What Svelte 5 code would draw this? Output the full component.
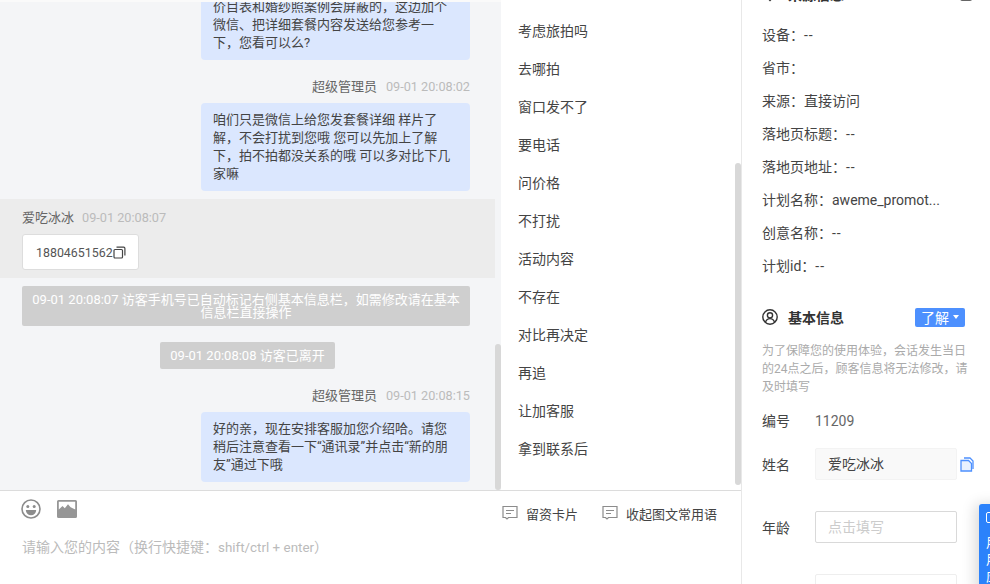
<script>
	const messages = [
		{ type: 'agent', name: '超级管理员', time: '09-01 20:08:02', text: '价目表和婚纱照案例会屏蔽的\uff0c这边加个微信、把详细套餐内容发送给您参考一下\uff0c您看可以么?' },
		{ type: 'agent', name: '超级管理员', time: '09-01 20:08:02', text: '咱们只是微信上给您发套餐详细 样片了解\uff0c不会打扰到您哦 您可以先加上了解下\uff0c拍不拍都没关系的哦 可以多对比下几家嘛' },
		{ type: 'visitor', name: '爱吃冰冰', time: '09-01 20:08:07', phone: '18804651562' },
		{ type: 'notice', wide: true, text: '09-01 20:08:07 访客手机号已自动标记右侧基本信息栏\uff0c如需修改请在基本信息栏直接操作' },
		{ type: 'notice', text: '09-01 20:08:08 访客已离开' },
		{ type: 'agent', name: '超级管理员', time: '09-01 20:08:15', text: '好的亲\uff0c现在安排客服加您介绍哈。请您稍后注意查看一下“通讯录”并点击“新的朋友”通过下哦' }
	];

	const phrases = ['考虑旅拍吗', '去哪拍', '窗口发不了', '要电话', '问价格', '不打扰', '活动内容', '不存在', '对比再决定', '再追', '让加客服', '拿到联系后'];

	const colon = '\uff1a';
	const source = [
		['设备', '--'],
		['省市', ''],
		['来源', '直接访问'],
		['落地页标题', '--'],
		['落地页地址', '--'],
		['计划名称', 'aweme_promot...'],
		['创意名称', '--'],
		['计划id', '--']
	];
</script>

<div class="page">
	<div class="main">
		<div class="top">
			<div class="chat">
				{#each messages as m}
					{#if m.type === 'notice'}
						<div class="notice" class:wide={m.wide}>{m.text}</div>
					{:else if m.type === 'visitor'}
						<div class="msg visitor">
							<div class="meta"><span class="name">{m.name}</span><span class="time">{m.time}</span></div>
							<div class="card">
								<span class="phone">{m.phone}</span>
								<svg width="13" height="13" viewBox="0 0 13 13" fill="none" stroke="#444" stroke-width="1.2">
									<rect x="1" y="3.5" width="8.5" height="8.5" rx="1" />
									<path d="M3.5 1.2h7.2a1.2 1.2 0 0 1 1.2 1.2v7" />
								</svg>
							</div>
						</div>
					{:else}
						<div class="msg agent">
							<div class="meta"><span class="name">{m.name}</span><span class="time">{m.time}</span></div>
							<div class="bubble">{m.text}</div>
						</div>
					{/if}
				{/each}
				<div class="thumb chat-thumb"></div>
			</div>
			<div class="phrases">
				{#each phrases as p}
					<div class="phrase">{p}</div>
				{/each}
				<div class="thumb list-thumb"></div>
			</div>
		</div>
		<div class="composer">
			<div class="tools">
				<div class="tools-left">
					<svg width="20" height="20" viewBox="0 0 20 20" fill="none">
						<circle cx="10" cy="10" r="9" stroke="#8c8c8c" stroke-width="1.6" />
						<circle cx="6.8" cy="7.4" r="1.5" fill="#8c8c8c" />
						<circle cx="13.2" cy="7.4" r="1.5" fill="#8c8c8c" />
						<path d="M4.8 11h10.4a5.2 5.2 0 0 1-10.4 0z" fill="#8c8c8c" />
					</svg>
					<svg width="20" height="20" viewBox="0 0 20 20">
						<path fill-rule="evenodd" fill="#969696" d="M1.500 1h17a1.500 1.500 0 0 1 1.500 1.500v15a1.500 1.500 0 0 1-1.500 1.500h-17a1.500 1.500 0 0 1-1.500-1.500v-15a1.500 1.500 0 0 1 1.500-1.500zM1.800 2.800v7.700l3.700-3.500 2.300 2.200 3.200-4 2.600 3 4.600 2.300v-7.700z" />
					</svg>
				</div>
				<div class="tools-right">
					<div class="tool">
						<svg width="16" height="16" viewBox="0 0 16 16" fill="none" stroke="#8c8c8c" stroke-width="1.200">
							<path d="M1 1.500h14v11h-8.500l-1.500 1.500-1.500-1.500h-2.500z" />
							<path d="M4 5.500h8M4 8.500h5" />
						</svg>
						留资卡片
					</div>
					<div class="tool">
						<svg width="16" height="16" viewBox="0 0 16 16" fill="none" stroke="#8c8c8c" stroke-width="1.200">
							<path d="M1 1.500h14v11h-8.500l-1.500 1.500-1.500-1.500h-2.500z" />
							<path d="M4 5.500h8M4 8.500h5" />
						</svg>
						收起图文常用语
					</div>
				</div>
			</div>
			<div class="placeholder">{'请输入您的内容\uff08换行快捷键\uff1a'}<span class="hint">shift/ctrl + enter</span>{'\uff09'}</div>
		</div>
	</div>

	<aside class="side">
		<div class="section-head">
			<svg width="16" height="16" viewBox="0 0 16 16" fill="none" stroke="#333" stroke-width="1.300">
				<path d="M8 14.500 2 8.500V2h12v6.500z" />
			</svg>
			<span class="section-title">来源信息</span>
			<svg class="head-end" width="14" height="14" viewBox="0 0 14 14" fill="none" stroke="#333" stroke-width="1.300">
				<rect x="1" y="1" width="12" height="12" rx="2" />
			</svg>
		</div>
		<div class="source">
			{#each source as [label, value]}
				<div class="source-row">{label}{colon}<span class:dash={value === '--'}>{value}</span></div>
			{/each}
		</div>

		<div class="section-head">
			<svg width="16" height="16" viewBox="0 0 16 16" fill="none" stroke="#333" stroke-width="1.400">
				<circle cx="8" cy="8" r="7.200" />
				<circle cx="8" cy="6.300" r="2.600" />
				<path d="M3.500 13c.8-2.300 2.500-3.400 4.500-3.400s3.700 1.100 4.500 3.400" />
			</svg>
			<span class="section-title">基本信息</span>
			<div class="learn">了解<span class="caret"></span></div>
		</div>
		<p class="desc">{'为了保障您的使用体验\uff0c会话发生当日的24点之后\uff0c顾客信息将无法修改\uff0c请及时填写'}</p>

		<div class="field plain">
			<span class="label">编号</span>
			<span class="number">11209</span>
		</div>
		<div class="field">
			<span class="label">姓名</span>
			<div class="input filled">爱吃冰冰</div>
			<svg class="copy" width="14" height="15" viewBox="0 0 14 15" fill="none" stroke="#4d90fe" stroke-width="1.300">
				<path d="M1 3.500h7.500l3 3v7.500h-10.500z" fill="#e8f1ff" />
				<path d="M4 1h6l3 3v8" />
			</svg>
		</div>
		<div class="field">
			<span class="label">年龄</span>
			<div class="input empty">点击填写</div>
		</div>
		<div class="field">
			<span class="label"></span>
			<div class="input faint"></div>
		</div>
	</aside>

	<div class="float">
		<span class="float-icon"></span>
		<span>用</span>
		<span>用</span>
		<span>应</span>
	</div>
</div>

<style>
	:global(body) {
		margin: 0;
		background: #fff;
	}

	.page {
		position: relative;
		display: flex;
		width: 990px;
		height: 584px;
		overflow: hidden;
		font-family: Roboto, 'Noto Sans CJK SC', sans-serif;
		font-size: 14px;
		color: #444;
	}

	.page::before {
		content: '';
		position: absolute;
		top: 0;
		left: 0;
		width: 501px;
		height: 2px;
		background: #fafafa;
		z-index: 2;
	}

	.main {
		width: 741px;
		flex-shrink: 0;
		display: flex;
		flex-direction: column;
		border-right: 1px solid #e8e8e8;
	}

	.top {
		height: 490px;
		flex-shrink: 0;
		display: flex;
		border-bottom: 1px solid #dcdcdc;
		box-sizing: content-box;
	}

	.chat {
		position: relative;
		width: 501px;
		padding-right: 6px;
		box-sizing: border-box;
		flex-shrink: 0;
		display: flex;
		flex-direction: column;
		justify-content: flex-end;
		overflow: hidden;
		background: #f4f5f7;
		font-size: 13px;
	}

	.thumb {
		position: absolute;
		right: 0;
		width: 6px;
		background: #d8d8d8;
		border-radius: 3px;
	}

	.chat-thumb {
		top: 344px;
		bottom: 0;
	}

	.list-thumb {
		top: 163px;
		bottom: 5px;
	}

	.msg {
		flex-shrink: 0;
		display: flex;
		flex-direction: column;
		padding: 10px 25px 8px 22px;
	}

	.agent {
		align-items: flex-end;
	}

	.visitor {
		background: #ececec;
		align-items: flex-start;
	}

	.meta {
		height: 18px;
		line-height: 18px;
		margin-bottom: 7px;
		color: #666;
	}

	.time {
		color: #bbb;
		font-size: 12.7px;
		margin-left: 9px;
	}

	.visitor .time {
		margin-left: 8px;
	}

	.bubble {
		width: 269px;
		box-sizing: border-box;
		padding: 8px 12px;
		line-height: 18px;
		background: #dbe7fe;
		border-radius: 4px;
		color: #444;
	}

	.card {
		display: flex;
		align-items: center;
		height: 36px;
		box-sizing: border-box;
		padding: 0 12px 0 13px;
		background: #fff;
		border: 1px solid #ddd;
		border-radius: 3px;
		color: #555;
	}

	.phone {
		font-size: 12.4px;
	}

	.notice {
		flex-shrink: 0;
		align-self: center;
		margin: 8px 0;
		padding: 7px 10px;
		line-height: 13px;
		text-align: center;
		color: #fff;
		background: #cfcfcf;
		border-radius: 2px;
	}

	.notice.wide {
		align-self: stretch;
		margin-left: 22px;
		margin-right: 25px;
	}

	.phrases {
		position: relative;
		flex: 1;
		padding-top: 12px;
		background: #fff;
		color: #444;
	}

	.phrase {
		height: 38px;
		line-height: 38px;
		padding-left: 17px;
	}

	.composer {
		flex: 1;
		background: #fff;
		font-size: 13px;
	}

	.tools {
		display: flex;
		justify-content: space-between;
		height: 38px;
		padding: 8px 0 0 21px;
		box-sizing: border-box;
	}

	.tools-left {
		display: flex;
		gap: 16px;
	}

	.tools-right {
		display: flex;
		gap: 24px;
		padding-right: 24px;
	}

	.tool {
		display: flex;
		gap: 8px;
		height: 28px;
		align-items: center;
		color: #444;
	}

	.placeholder {
		padding: 9px 0 0 22px;
		line-height: 18px;
		font-size: 14px;
		color: #bbb;
	}

	.hint {
		font-size: 13.4px;
	}

	.side {
		flex: 1;
		margin-top: -18px;
		padding-left: 20px;
		color: #444;
	}

	.section-head {
		display: flex;
		align-items: center;
		gap: 10px;
		height: 24px;
	}

	.section-title {
		font-weight: 700;
		color: #333;
	}

	.head-end {
		margin-left: auto;
		margin-right: 17px;
	}

	.source {
		margin-top: 13px;
		margin-bottom: 22px;
	}

	.source-row {
		height: 33px;
		line-height: 33px;
		white-space: nowrap;
	}

	.dash {
		letter-spacing: 1px;
	}

	.learn {
		display: flex;
		align-items: center;
		justify-content: center;
		gap: 4px;
		width: 50px;
		height: 19px;
		margin-left: auto;
		margin-right: 25px;
		color: #fff;
		background: #4d90fe;
		border-radius: 2px;
	}

	.caret {
		width: 0;
		height: 0;
		border-left: 3.500px solid transparent;
		border-right: 3.500px solid transparent;
		border-top: 4px solid #fff;
	}

	.desc {
		margin: 13px 15px 12px 0;
		font-size: 12px;
		line-height: 18px;
		color: #aaa;
	}

	.field {
		display: flex;
		align-items: center;
		height: 32px;
		margin-bottom: 31px;
	}

	.field.plain {
		height: 24px;
		margin-bottom: 16px;
	}

	.label {
		width: 53px;
		flex-shrink: 0;
	}

	.input {
		width: 142px;
		height: 32px;
		box-sizing: border-box;
		padding-left: 12px;
		line-height: 31px;
		border-radius: 2px;
	}

	.filled {
		background: #f9f9f9;
		border: 1px solid #f3f3f3;
		color: #444;
	}

	.empty {
		border: 1px solid #d9d9d9;
		color: #ccc;
	}

	.faint {
		border: 1px solid #eee;
	}

	.copy {
		margin-left: 3px;
	}

	.number {
		color: #666;
		padding-top: 1px;
	}

	.float {
		position: absolute;
		left: 979px;
		top: 504px;
		width: 60px;
		height: 90px;
		padding: 8px 0 0 7px;
		box-sizing: border-box;
		display: flex;
		flex-direction: column;
		color: #fff;
		background: #2b82fb;
		border-radius: 3px 0 0 0;
		box-shadow: -4px 0 14px rgba(0, 0, 0, 0.15);
		font-size: 13px;
		line-height: 17px;
	}

	.float-icon {
		width: 11px;
		height: 11px;
		margin-bottom: 11px;
		border: 1.500px solid #fff;
		border-radius: 2px;
		box-sizing: border-box;
	}
</style>
